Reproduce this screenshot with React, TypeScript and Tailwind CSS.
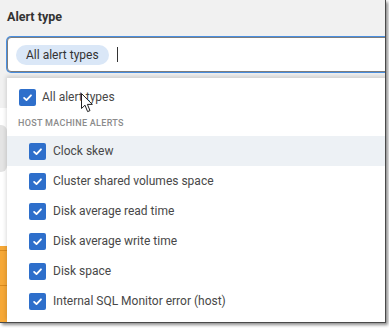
import React from "react";

const Check = () => (
  <span className="flex h-[17px] w-[17px] shrink-0 items-center justify-center rounded-[2px] bg-[#2e6fcb]">
    <svg width="11" height="11" viewBox="0 0 12 12" fill="none">
      <path d="M2.3 6.4 L4.9 8.8 L9.8 3.6" stroke="white" strokeWidth="2" strokeLinecap="round" strokeLinejoin="round" />
    </svg>
  </span>
);

const items = [
  "Clock skew",
  "Cluster shared volumes space",
  "Disk average read time",
  "Disk average write time",
  "Disk space",
  "Internal SQL Monitor error (host)",
];

export default function App() {
  return (
    <div className="relative h-[328px] w-[389px] overflow-hidden bg-white" style={{ fontFamily: "Roboto, 'Liberation Sans', sans-serif" }}>
      <div className="relative h-[323px] w-[386px] overflow-hidden border-b border-r border-[#4a4a4a] bg-white shadow-[2px_2px_3px_rgba(0,0,0,0.45)]">
        {/* Top section */}
        <div className="flex flex-col bg-[#f1f1f1] pl-[7px] pt-[8px]">
          <div className="h-[18px] text-[12.5px] font-bold leading-[18px] text-[#333]">Alert type</div>
          <div className="mr-[-20px] mt-[11px] flex h-[35px] items-center rounded-l-[4px] border border-[#7d7d7d] bg-white pl-[8px] shadow-[0_0_0_1px_#4a8fe0]">
            <span className="flex h-[20px] items-center rounded-full bg-[#dae7f7] px-[10px] text-[12px] text-[#333]">All alert types</span>
            <span className="ml-[8px] h-[15px] w-[1px] bg-[#333]" />
          </div>
          {/* page behind */}
          <div className="h-[36px]" />
        </div>
        <div className="flex w-[7px] flex-col">
          <div className="h-[17px]" />
          <div className="h-[47px] rounded-r-[6px] bg-[#e4e4e4]" />
          <div className="h-[74px]" />
          <div className="flex h-[82px] flex-col bg-[#f6a836]">
            <div className="h-[4px]" />
            <div className="h-[1px] bg-[#d98a1e]" />
            <div className="h-[34px]" />
            <div className="h-[1px] bg-[#d98a1e]" />
          </div>
        </div>

        {/* Dropdown panel */}
        <div className="absolute bottom-0 left-[7px] right-[-20px] top-[78px] flex flex-col bg-white shadow-[-1px_-2px_4px_rgba(0,0,0,0.14)]">
          <div className="mt-[4px] flex h-[30px] items-center gap-[6px] pl-[12px] text-[12px] text-[#484848]">
            <Check />
            <span>All alert types</span>
          </div>
          <div className="flex h-[24px] items-center pl-[11px] text-[9px] font-medium tracking-[0.3px] text-[#8b8b8b]">HOST MACHINE ALERTS</div>
          {items.map((t, i) => (
            <div key={t} className={`flex h-[30px] items-center gap-[7px] pl-[22px] text-[12px] text-[#484848] ${i === 0 ? "bg-[#edf1f5]" : ""}`}>
              <Check />
              <span>{t}</span>
            </div>
          ))}
          {/* mouse pointer overlay */}
          <svg className="absolute left-[74px] top-[15px]" width="13" height="20" viewBox="0 0 13 20">
            <path d="M0.5 0.5 L0.5 15.5 L4 12.2 L6.6 18.6 L9 17.6 L6.4 11.4 L11.3 11.4 Z" fill="white" stroke="#222" strokeWidth="1" strokeLinejoin="round" />
          </svg>
        </div>
      </div>
    </div>
  );
}
